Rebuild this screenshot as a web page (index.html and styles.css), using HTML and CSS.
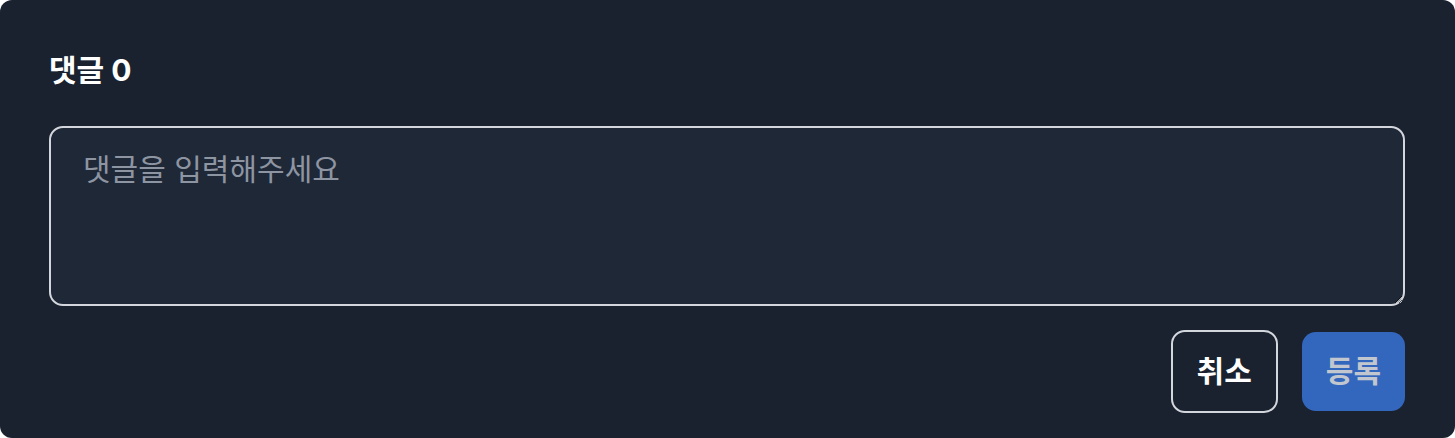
FILE: index.html
```html
<!DOCTYPE html>
<html lang="ko">

<head>
    <meta charset="UTF-8">
    <meta name="viewport" content="width=device-width, initial-scale=1.0">
    <title>댓글</title>
    <link rel="stylesheet" href="styles.css">
</head>

<body>

    <div class="comments">
        <h2 class="comments-title">댓글 0</h2>

        <form class="comment-form">
            <textarea class="comment-input" placeholder="댓글을 입력해주세요"></textarea>

            <div class="comment-actions">
                <button type="button" class="btn btn-cancel">취소</button>
                <button type="submit" class="btn btn-submit" disabled>등록</button>
            </div>
        </form>
    </div>

</body>

</html>
```

FILE: styles.css
```css
body {
    margin: 0;
    background: #ffffff;
    font-family: Inter, "Noto Sans CJK KR", sans-serif;
}

.comments {
    height: 438px;
    box-sizing: border-box;
    padding: 49px 50px 0 49px;
    background: #1a2230;
    border-radius: 12px;
}

.comments-title {
    margin: 0 0 35px;
    font-size: 30px;
    line-height: 42px;
    font-weight: 700;
    color: #ffffff;
}

.comment-input {
    display: block;
    width: 100%;
    height: 180px;
    box-sizing: border-box;
    padding: 20px 32px;
    background: #1f2837;
    border: 2px solid #d3d6dc;
    border-radius: 14px;
    color: #ffffff;
    font-family: inherit;
    font-size: 30px;
    line-height: 42px;
    outline: none;
}

.comment-input::placeholder {
    color: #8e95a2;
}

.comment-actions {
    display: flex;
    justify-content: flex-end;
    align-items: center;
    gap: 24px;
    margin-top: 24px;
}

.btn {
    padding: 18px 24px;
    border-radius: 14px;
    font-family: inherit;
    font-size: 30px;
    line-height: 43px;
    font-weight: 700;
    cursor: pointer;
}

.btn-cancel {
    background: transparent;
    border: 2px solid #d3d6dc;
    color: #ffffff;
}

.btn-submit {
    background: #3367bd;
    border: none;
    color: #c2c6ce;
}
```
